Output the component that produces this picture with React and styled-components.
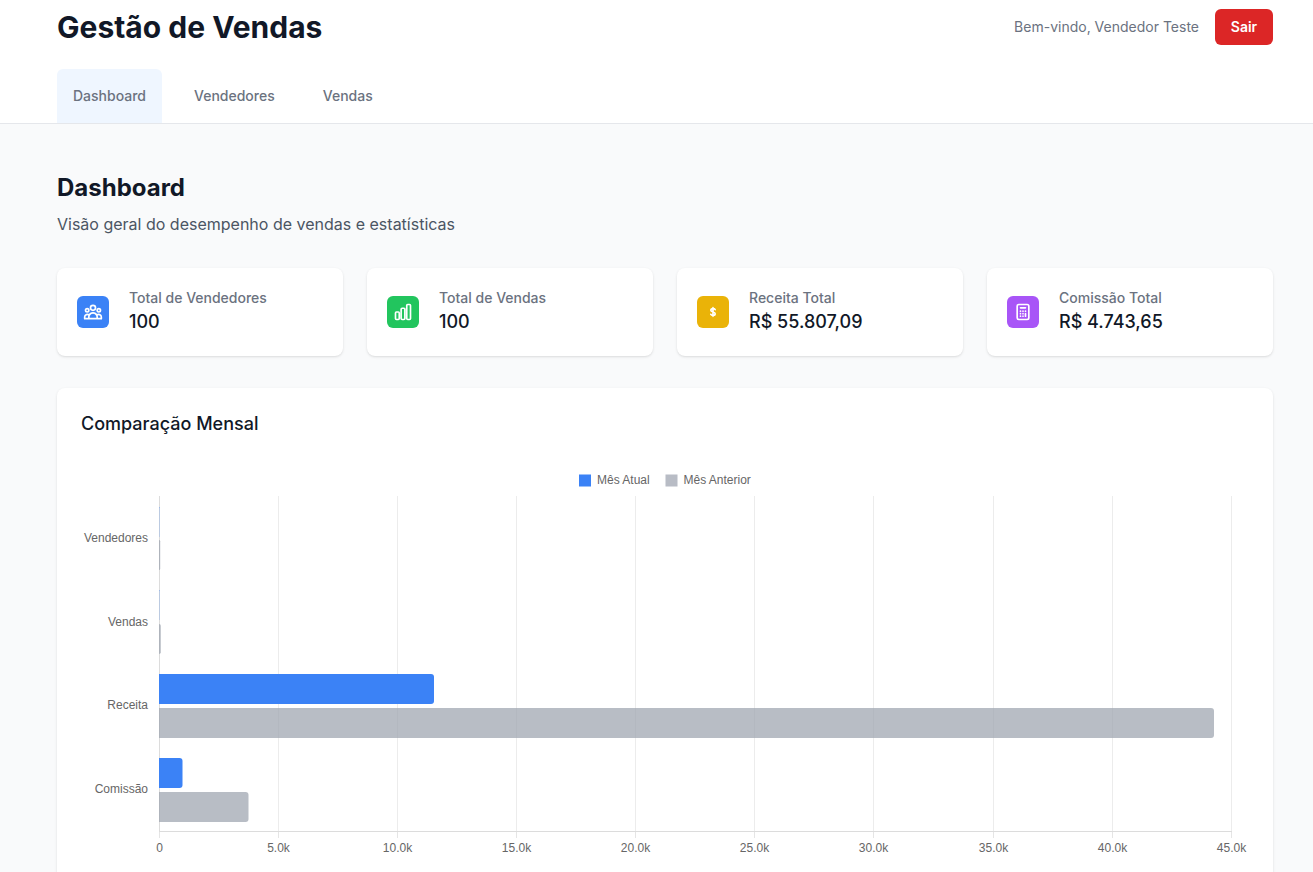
import React from "react";
import styled, { createGlobalStyle } from "styled-components";

const Global = createGlobalStyle`
  html, body { margin: 0; padding: 0; height: 872px; overflow: hidden; background: #f9fafb; }
  * { box-sizing: border-box; }
  body { font-family: Inter, "Liberation Sans", sans-serif; }
`;
const Page = styled.div`min-height: 872px; background: #f9fafb;`;
const Header = styled.header`background: #fff; border-bottom: 1px solid #e5e7eb; height: 124px; padding: 0 40px 0 57px;`;
const TopRow = styled.div`display: flex; align-items: center; justify-content: space-between; height: 54px; margin-bottom: 15px;`;
const Title = styled.h1`margin: 0; font-size: 30px; line-height: 36px; font-weight: 700; color: #111827;`;
const UserArea = styled.div`display: flex; align-items: center; gap: 16px;`;
const Welcome = styled.span`font-size: 14px; line-height: 20px; color: #6b7280;`;
const Logout = styled.button`width: 58px; height: 36px; border: 0; border-radius: 6px; background: #dc2626; color: #fff; font: 600 14px/20px Inter, sans-serif; padding: 0;`;
const Tabs = styled.nav`display: flex; gap: 0;`;
const Tab = styled.a`display: block; height: 54px; padding: 0 16px; margin-right: ${p => p.$gap}px; border-radius: 6px 6px 0 0; background: ${p => p.$active ? "#eff6ff" : "transparent"}; color: #6b7280; font-size: 14px; font-weight: 500; line-height: 53px;`;
const Main = styled.main`padding: 48px 40px 0 57px;`;
const H2 = styled.h2`margin: 0; font-size: 24px; line-height: 32px; font-weight: 700; color: #111827;`;
const Sub = styled.p`margin: 8px 0 0; font-size: 16px; line-height: 24px; color: #4b5563;`;
const Cards = styled.div`display: grid; grid-template-columns: repeat(4, 286px); column-gap: 24px; margin-top: 32px;`;
const Card = styled.div`height: 88px; background: #fff; border-radius: 8px; box-shadow: 0 1px 3px rgba(0,0,0,.1), 0 1px 2px -1px rgba(0,0,0,.1); padding: 0 20px; display: flex; align-items: center; gap: 20px;`;
const IconBox = styled.div`width: 32px; height: 32px; border-radius: 6px; background: ${p => p.$bg}; display: flex; align-items: center; justify-content: center; flex: none;`;
const CardLabel = styled.div`font-size: 14px; line-height: 20px; font-weight: 500; color: #6b7280;`;
const CardValue = styled.div`font-size: 18px; line-height: 28px; font-weight: 500; color: #111827;`;
const ChartCard = styled.section`margin-top: 32px; background: #fff; border-radius: 8px; height: 560px; padding: 24px; box-shadow: 0 1px 3px rgba(0,0,0,.1), 0 1px 2px -1px rgba(0,0,0,.1);`;
const ChartTitle = styled.h3`margin: 0; font-size: 18px; line-height: 24px; font-weight: 500; color: #111827;`;
const ChartSvg = styled.svg`display: block; margin: 12px 0 0 -24px; overflow: visible;`;
const ChartText = styled.text`font-family: "Liberation Sans", Arial, sans-serif; font-size: 12px; fill: #666;`;

const stroke = { fill: "none", stroke: "#fff", strokeWidth: 2, strokeLinecap: "round", strokeLinejoin: "round" };
const Users = () => (
  <svg width="20" height="20" viewBox="0 0 24 24" {...stroke}>
    <path d="M17 20h5v-2a3 3 0 0 0-5.36-1.86M17 20H7m10 0v-2c0-.66-.13-1.28-.36-1.86M7 20H2v-2a3 3 0 0 1 5.36-1.86M7 20v-2c0-.66.13-1.28.36-1.86m0 0a5 5 0 0 1 9.28 0M15 7a3 3 0 1 1-6 0 3 3 0 0 1 6 0Zm6 3a2 2 0 1 1-4 0 2 2 0 0 1 4 0ZM7 10a2 2 0 1 1-4 0 2 2 0 0 1 4 0Z" />
  </svg>
);
const Bars = () => (
  <svg width="20" height="20" viewBox="0 0 24 24" {...stroke}>
    <path d="M3 13.125C3 12.504 3.504 12 4.125 12h2.25c.621 0 1.125.504 1.125 1.125v6.75C7.5 20.496 6.996 21 6.375 21h-2.25A1.125 1.125 0 0 1 3 19.875v-6.75ZM9.75 8.625c0-.621.504-1.125 1.125-1.125h2.25c.621 0 1.125.504 1.125 1.125v11.25c0 .621-.504 1.125-1.125 1.125h-2.25a1.125 1.125 0 0 1-1.125-1.125V8.625ZM16.5 4.125c0-.621.504-1.125 1.125-1.125h2.25C20.496 3 21 3.504 21 4.125v15.75c0 .621-.504 1.125-1.125 1.125h-2.25a1.125 1.125 0 0 1-1.125-1.125V4.125Z" />
  </svg>
);
const Dollar = () => (
  <svg width="20" height="20" viewBox="0 0 24 24" {...stroke}>
    <path d="M14.6 9.2c-.4-.8-1.300-1.200-2.600-1.200-1.500 0-2.600.8-2.600 2s1 1.700 2.600 2 2.600.8 2.600 2-1.100 2-2.600 2c-1.300 0-2.200-.4-2.600-1.200M12 6.800v10.400" />
  </svg>
);
const Calc = () => (
  <svg width="20" height="20" viewBox="0 0 24 24" {...stroke}>
    <path d="M9 7h6m0 10v-3m-3 3h.01M9 17h.01M9 14h.01M12 14h.01M15 11h.01M12 11h.01M9 11h.01M7 21h10a2 2 0 0 0 2-2V5a2 2 0 0 0-2-2H7a2 2 0 0 0-2 2v14a2 2 0 0 0 2 2z" />
  </svg>
);

const stats = [
  { label: "Total de Vendedores", value: "100", bg: "#3b82f6", Icon: Users },
  { label: "Total de Vendas", value: "100", bg: "#22c55e", Icon: Bars },
  { label: "Receita Total", value: "R$ 55.807,09", bg: "#eab308", Icon: Dollar },
  { label: "Comissão Total", value: "R$ 4.743,65", bg: "#a855f7", Icon: Calc },
];

const X0 = 159, TOP = 496, BOTTOM = 831;
const PREV = "rgba(156,163,175,.72)";
const ticks = [
  ["0", 159], ["5.0k", 278], ["10.0k", 397], ["15.0k", 516], ["20.0k", 635],
  ["25.0k", 754], ["30.0k", 873], ["35.0k", 993], ["40.0k", 1112], ["45.0k", 1231],
];
const rows = [
  { name: "Vendedores", y: 537.5, cur: 0.2, prev: 1.2, curY: 507, prevY: 540 },
  { name: "Vendas", y: 621.5, cur: 0.2, prev: 1.8, curY: 590, prevY: 624 },
  { name: "Receita", y: 704.5, cur: 275, prev: 1055, curY: 674, prevY: 708 },
  { name: "Comissão", y: 788.5, cur: 23.5, prev: 89.5, curY: 758, prevY: 792 },
];
const Bar = ({ x, y, w, fill }) => {
  const r = Math.min(3, w);
  return <path d={`M${x} ${y}h${w - r}q${r} 0 ${r} ${r}v${30 - 2 * r}q0 ${r} ${-r} ${r}h${r - w}z`} fill={fill} />;
};

const Chart = () => (
  <ChartSvg width="1216" height="440" viewBox="57 448 1216 440">
    <rect x="579" y="474.5" width="12" height="12" fill="#3b82f6" />
    <ChartText x="597" y="484">Mês Atual</ChartText>
    <rect x="665.5" y="474.5" width="12" height="12" fill="#b8bcc5" />
    <ChartText x="683.5" y="484">Mês Anterior</ChartText>
    {ticks.map(([t, tx], i) => {
      const x = tx + 0.5;
      return (
        <g key={t}>
          <line x1={x} x2={x} y1={TOP} y2={BOTTOM} stroke={i === 0 ? "#dcdcdc" : "#ececec"} />
          <line x1={x} x2={x} y1={BOTTOM} y2={BOTTOM + 7} stroke="#e5e5e5" />
          <ChartText x={x} y={852} textAnchor="middle">{t}</ChartText>
        </g>
      );
    })}
    <line x1={X0} x2={1232} y1={831.5} y2={831.5} stroke="#dcdcdc" />
    {rows.map(r => (
      <g key={r.name}>
        <ChartText x={148} y={r.y + 4} textAnchor="end">{r.name}</ChartText>
        <Bar x={X0} y={r.curY} w={r.cur} fill="#3b82f6" />
        <Bar x={X0} y={r.prevY} w={r.prev} fill={PREV} />
      </g>
    ))}
  </ChartSvg>
);

export default function App() {
  return (
    <Page>
      <Global />
      <Header>
        <TopRow>
          <Title>Gestão de Vendas</Title>
          <UserArea>
            <Welcome>Bem-vindo, Vendedor Teste</Welcome>
            <Logout>Sair</Logout>
          </UserArea>
        </TopRow>
        <Tabs>
          <Tab $active $gap={16}>Dashboard</Tab>
          <Tab $gap={16}>Vendedores</Tab>
          <Tab $gap={0}>Vendas</Tab>
        </Tabs>
      </Header>
      <Main>
        <H2>Dashboard</H2>
        <Sub>Visão geral do desempenho de vendas e estatísticas</Sub>
        <Cards>
          {stats.map(({ label, value, bg, Icon }) => (
            <Card key={label}>
              <IconBox $bg={bg}><Icon /></IconBox>
              <div>
                <CardLabel>{label}</CardLabel>
                <CardValue>{value}</CardValue>
              </div>
            </Card>
          ))}
        </Cards>
        <ChartCard>
          <ChartTitle>Comparação Mensal</ChartTitle>
          <Chart />
        </ChartCard>
      </Main>
    </Page>
  );
}
